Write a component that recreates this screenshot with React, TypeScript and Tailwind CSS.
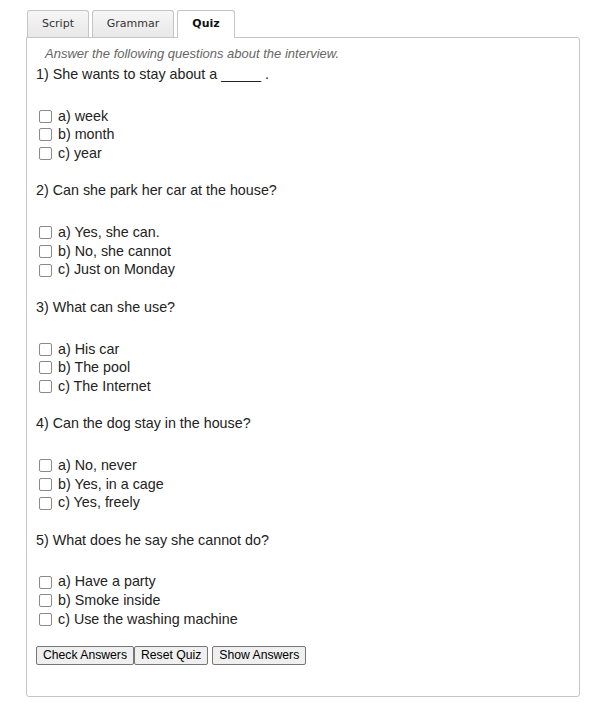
const questions = [
  { q: "1) She wants to stay about a _____ .", options: ["a) week", "b) month", "c) year"] },
  { q: "2) Can she park her car at the house?", options: ["a) Yes, she can.", "b) No, she cannot", "c) Just on Monday"] },
  { q: "3) What can she use?", options: ["a) His car", "b) The pool", "c) The Internet"] },
  { q: "4) Can the dog stay in the house?", options: ["a) No, never", "b) Yes, in a cage", "c) Yes, freely"] },
  { q: "5) What does he say she cannot do?", options: ["a) Have a party", "b) Smoke inside", "c) Use the washing machine"] },
];

const tabs = [
  { label: "Script", w: "w-[62px]", active: false },
  { label: "Grammar", w: "w-[82px]", active: false },
  { label: "Quiz", w: "w-[58px]", active: true },
];

export default function App() {
  return (
    <div className="min-h-screen bg-white font-['Liberation_Sans',Arial,sans-serif] text-[#222]">
      <div className="ml-[26px] w-[554px] pt-[10px]">
        {/* tab strip */}
        <div className="relative z-10 flex gap-[3px] pl-[1px] font-['DejaVu_Sans',Verdana,sans-serif] text-[11px]">
          {tabs.map((t) => (
            <div
              key={t.label}
              className={
                t.active
                  ? `${t.w} -mb-px flex h-[28px] items-center justify-center rounded-t-[3px] border border-b-0 border-[#c5c5c5] bg-white font-bold text-[#111]`
                  : `${t.w} flex h-[27px] items-center justify-center rounded-t-[3px] border border-b-0 border-[#c5c5c5] bg-gradient-to-b from-[#f6f6f6] to-[#e8e8e8] text-[#333]`
              }
            >
              {t.label}
            </div>
          ))}
        </div>

        {/* panel */}
        <div className="h-[660px] rounded-b-[3px] rounded-tr-[3px] border border-[#c5c5c5] pl-[9px] pt-[7px]">
          <div className="h-[18px] pl-[9px] text-[13px] leading-[18px] italic text-[#666]">
            Answer the following questions about the interview.
          </div>
          <div className="mt-[2px]">
            {questions.map((item) => (
              <div key={item.q} className="mb-[18.5px]">
                <div className="h-[18px] text-[14.3px] leading-[18px]">{item.q}</div>
                <div className="mt-[24px]">
                  {item.options.map((o) => (
                    <label key={o} className="flex h-[18.67px] items-center gap-[6px] pl-[3px] text-[14.3px]">
                      <input type="checkbox" className="h-[13px] w-[13px] appearance-none rounded-[2px] border border-[#8a8a8a] bg-white" />
                      <span>{o}</span>
                    </label>
                  ))}
                </div>
              </div>
            ))}
          </div>
          <div className="-mt-[1.5px] flex text-[12.2px] text-black">
            <button className="h-[19px] rounded-[2px] border border-[#767676] bg-[#efefef] px-[6px] leading-[15px]">
              Check Answers
            </button>
            <button className="h-[19px] rounded-[2px] border border-[#767676] bg-[#efefef] px-[6px] leading-[15px]">
              Reset Quiz
            </button>
            <button className="ml-[4px] h-[19px] rounded-[2px] border border-[#767676] bg-[#efefef] px-[6px] leading-[15px]">
              Show Answers
            </button>
          </div>
        </div>
      </div>
    </div>
  );
}
